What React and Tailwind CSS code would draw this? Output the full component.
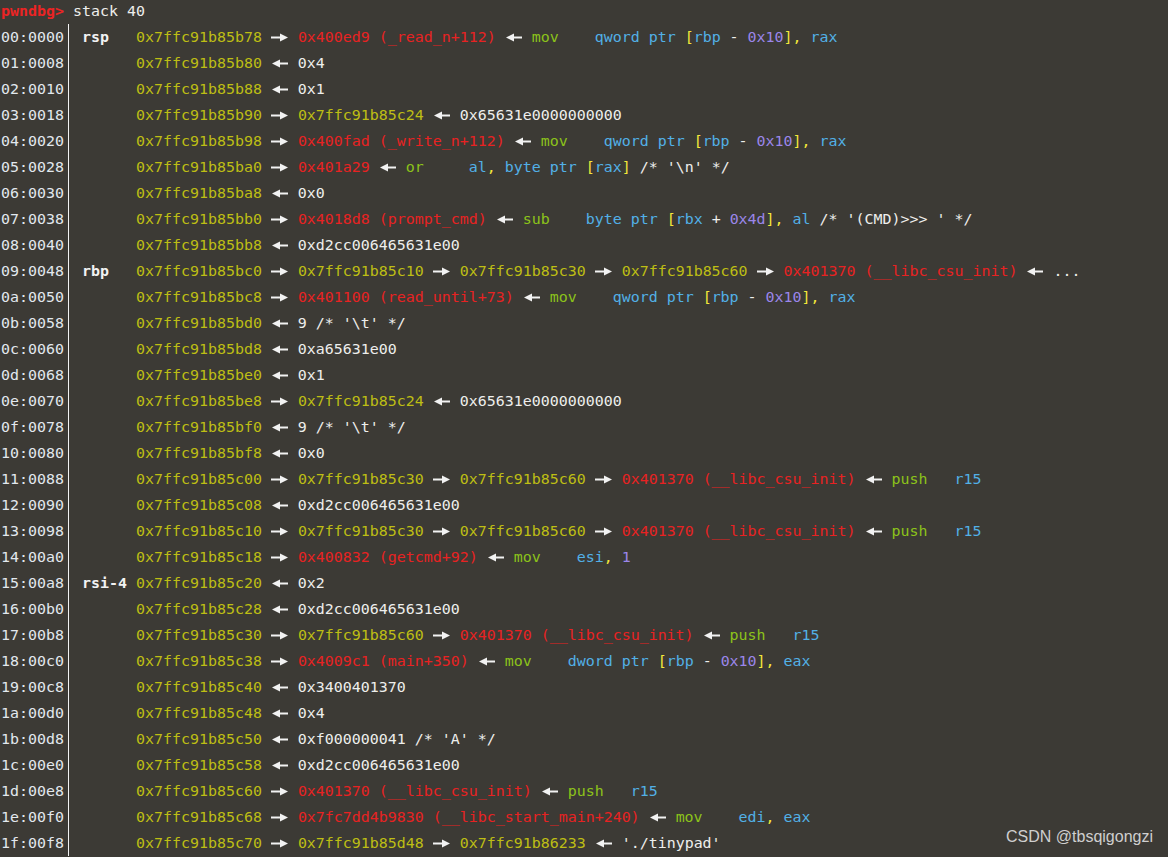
import React from 'react';

// colour classes for the little markup used in the rows
const colors = {
    y: 'text-[#bebe14]',
    r: 'text-[#e82222]',
    g: 'text-[#8cc31a]',
    c: 'text-[#52b0e6]',
    b: 'text-[#f4e83a]',
    p: 'text-[#9b86ea]',
    w: 'text-[#eeeeec]',
};

const movQ = '{g|mov}    {c|qword ptr }{b|[}{c|rbp} - {p|0x10}{b|],} {c|rax}';
const pushR15 = '{g|push}   {c|r15}';
const csu = '{r|0x401370 (__libc_csu_init)}';

const rows = [
    ['00:0000', 'rsp', '{y|0x7ffc91b85b78} —▸ {r|0x400ed9 (_read_n+112)} ◂— ' + movQ],
    ['01:0008', '', '{y|0x7ffc91b85b80} ◂— 0x4'],
    ['02:0010', '', '{y|0x7ffc91b85b88} ◂— 0x1'],
    ['03:0018', '', '{y|0x7ffc91b85b90} —▸ {y|0x7ffc91b85c24} ◂— 0x65631e0000000000'],
    ['04:0020', '', '{y|0x7ffc91b85b98} —▸ {r|0x400fad (_write_n+112)} ◂— ' + movQ],
    ['05:0028', '', "{y|0x7ffc91b85ba0} —▸ {r|0x401a29} ◂— {g|or}     {c|al}{b|,} {c|byte ptr }{b|[}{c|rax}{b|]} /* '\\n' */"],
    ['06:0030', '', '{y|0x7ffc91b85ba8} ◂— 0x0'],
    ['07:0038', '', "{y|0x7ffc91b85bb0} —▸ {r|0x4018d8 (prompt_cmd)} ◂— {g|sub}    {c|byte ptr }{b|[}{c|rbx} + {p|0x4d}{b|],} {c|al} /* '(CMD)>>> ' */"],
    ['08:0040', '', '{y|0x7ffc91b85bb8} ◂— 0xd2cc006465631e00'],
    ['09:0048', 'rbp', '{y|0x7ffc91b85bc0} —▸ {y|0x7ffc91b85c10} —▸ {y|0x7ffc91b85c30} —▸ {y|0x7ffc91b85c60} —▸ ' + csu + ' ◂— ...'],
    ['0a:0050', '', '{y|0x7ffc91b85bc8} —▸ {r|0x401100 (read_until+73)} ◂— ' + movQ],
    ['0b:0058', '', "{y|0x7ffc91b85bd0} ◂— 9 /* '\\t' */"],
    ['0c:0060', '', '{y|0x7ffc91b85bd8} ◂— 0xa65631e00'],
    ['0d:0068', '', '{y|0x7ffc91b85be0} ◂— 0x1'],
    ['0e:0070', '', '{y|0x7ffc91b85be8} —▸ {y|0x7ffc91b85c24} ◂— 0x65631e0000000000'],
    ['0f:0078', '', "{y|0x7ffc91b85bf0} ◂— 9 /* '\\t' */"],
    ['10:0080', '', '{y|0x7ffc91b85bf8} ◂— 0x0'],
    ['11:0088', '', '{y|0x7ffc91b85c00} —▸ {y|0x7ffc91b85c30} —▸ {y|0x7ffc91b85c60} —▸ ' + csu + ' ◂— ' + pushR15],
    ['12:0090', '', '{y|0x7ffc91b85c08} ◂— 0xd2cc006465631e00'],
    ['13:0098', '', '{y|0x7ffc91b85c10} —▸ {y|0x7ffc91b85c30} —▸ {y|0x7ffc91b85c60} —▸ ' + csu + ' ◂— ' + pushR15],
    ['14:00a0', '', '{y|0x7ffc91b85c18} —▸ {r|0x400832 (getcmd+92)} ◂— {g|mov}    {c|esi}{b|,} {p|1}'],
    ['15:00a8', 'rsi-4', '{y|0x7ffc91b85c20} ◂— 0x2'],
    ['16:00b0', '', '{y|0x7ffc91b85c28} ◂— 0xd2cc006465631e00'],
    ['17:00b8', '', '{y|0x7ffc91b85c30} —▸ {y|0x7ffc91b85c60} —▸ ' + csu + ' ◂— ' + pushR15],
    ['18:00c0', '', '{y|0x7ffc91b85c38} —▸ {r|0x4009c1 (main+350)} ◂— {g|mov}    {c|dword ptr }{b|[}{c|rbp} - {p|0x10}{b|],} {c|eax}'],
    ['19:00c8', '', '{y|0x7ffc91b85c40} ◂— 0x3400401370'],
    ['1a:00d0', '', '{y|0x7ffc91b85c48} ◂— 0x4'],
    ['1b:00d8', '', "{y|0x7ffc91b85c50} ◂— 0xf000000041 /* 'A' */"],
    ['1c:00e0', '', '{y|0x7ffc91b85c58} ◂— 0xd2cc006465631e00'],
    ['1d:00e8', '', '{y|0x7ffc91b85c60} —▸ ' + csu + ' ◂— ' + pushR15],
    ['1e:00f0', '', '{y|0x7ffc91b85c68} —▸ {r|0x7fc7dd4b9830 (__libc_start_main+240)} ◂— {g|mov}    {c|edi}{b|,} {c|eax}'],
    ['1f:00f8', '', "{y|0x7ffc91b85c70} —▸ {y|0x7ffc91b85d48} —▸ {y|0x7ffc91b86233} ◂— './tinypad'"],
];

// the terminal's "—▸" / "◂—" arrows, two cells wide
const Arrow = ({ left }) => (
    <svg width="18" height="14" viewBox="0 0 18 14" className="inline-block align-[-2px]">
        {left ? (
            <>
                <path d="M7 7.5H17" stroke="#f2f2f2" strokeWidth="2" />
                <path d="M1 7.5L9 3.5V11.5Z" fill="#f2f2f2" />
            </>
        ) : (
            <>
                <path d="M0 7.5H10" stroke="#f2f2f2" strokeWidth="2" />
                <path d="M17 7.5L9 3.5V11.5Z" fill="#f2f2f2" />
            </>
        )}
    </svg>
);

const plain = (text, key) =>
    text.split(/(—▸|◂—)/).map((piece, i) => {
        if (piece === '—▸') return <Arrow key={key + '-' + i} />;
        if (piece === '◂—') return <Arrow key={key + '-' + i} left />;
        if (!piece) return null;
        return <span key={key + '-' + i} className={colors.w}>{piece}</span>;
    });

// turn "{y|text} plain" into coloured spans
const renderLine = (line) => {
    const out = [];
    const re = /\{(\w)\|([^}]*)\}/g;
    let last = 0;
    let m;
    let k = 0;
    while ((m = re.exec(line)) !== null) {
        if (m.index > last) out.push(...plain(line.slice(last, m.index), k++));
        out.push(<span key={k++} className={colors[m[1]]}>{m[2]}</span>);
        last = re.lastIndex;
    }
    if (last < line.length) out.push(...plain(line.slice(last), k++));
    return out;
};

const StackRow = ({ idx, reg, line }) => (
    <div className="flex h-[26px] items-center">
        <span className="w-[63px] shrink-0 text-[#e2e8ee]">{idx}</span>
        <span className="flex w-[9px] shrink-0 justify-center self-stretch">
            <span className="w-px bg-[#f2f2f2]" />
        </span>
        <span className="whitespace-pre">
            <span className="text-[#f2f2f2]"> </span>
            <span className="font-bold text-[#f2f2f2]">{reg.padEnd(6, ' ')}</span>
            {renderLine(line)}
        </span>
    </div>
);

export default function App() {
    return (
        <div
            className="relative h-[857px] w-full overflow-hidden bg-[#3c3a35] pl-px text-[14.95px] leading-[26px]"
            style={{ fontFamily: '"DejaVu Sans Mono", "Liberation Mono", monospace' }}
        >
            {/* prompt */}
            <div className="flex h-[21px] items-center whitespace-pre">
                <span className="font-bold text-[#ec2424]">pwndbg&gt;</span>
                <span className="text-[#eeeeec]"> stack 40</span>
            </div>

            {/* stack dump */}
            <div className="mt-[3px] flex flex-col">
                {rows.map(([idx, reg, line]) => (
                    <StackRow key={idx} idx={idx} reg={reg} line={line} />
                ))}
            </div>

            {/* watermark */}
            <div
                className="absolute bottom-[10px] right-[15px] text-[16px] leading-[20px] text-[#cfcfcf]"
                style={{ fontFamily: '"Liberation Sans", Arial, sans-serif' }}
            >
                CSDN @tbsqigongzi
            </div>
        </div>
    );
}
